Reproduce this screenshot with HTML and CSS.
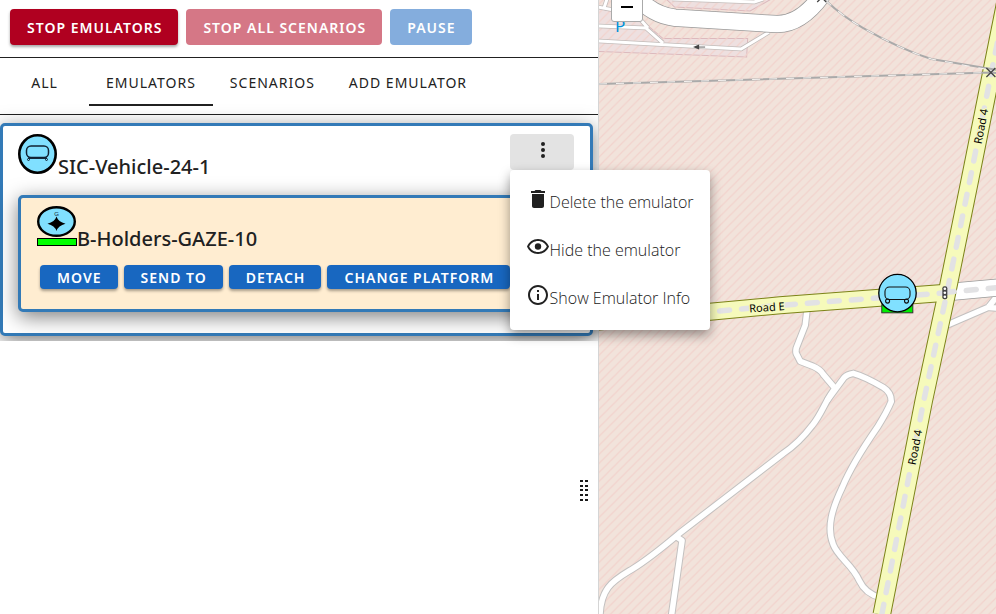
FILE: index.html
```html
<!DOCTYPE html>
<html lang="en">
<head>
<meta charset="utf-8">
<title>Emulators</title>
<link rel="stylesheet" href="styles.css">
</head>
<body>
<main class="app">
  <section class="panel">
    <header class="actions">
      <button class="btn btn-danger" type="button">STOP EMULATORS</button>
      <button class="btn btn-danger" type="button" disabled>STOP ALL SCENARIOS</button>
      <button class="btn btn-primary" type="button" disabled>PAUSE</button>
    </header>
    <nav class="tabs">
      <button class="tab" type="button">ALL</button>
      <button class="tab tab-active" type="button">EMULATORS</button>
      <button class="tab" type="button">SCENARIOS</button>
      <button class="tab" type="button">ADD EMULATOR</button>
    </nav>
    <div class="list">
      <article class="card">
        <div class="card-head">
          <div class="name">
            <svg class="symbol" width="40" height="40" viewBox="0 0 40 40" aria-hidden="true">
              <ellipse cx="19.5" cy="20" rx="18.2" ry="18.7" fill="#80e0ff" stroke="#000" stroke-width="2.6"/>
              <g fill="none" stroke="#123" stroke-width="1.5">
                <rect x="8.5" y="12" width="22" height="11.5" rx="4.5"/>
                <path d="M10 24.2h19"/>
                <circle cx="10.5" cy="25.5" r="1" stroke-width="1"/>
                <circle cx="28.5" cy="25.5" r="1" stroke-width="1"/>
              </g>
            </svg>
            <h2 class="title">SIC-Vehicle-24-1</h2>
          </div>
          <div class="menu-anchor">
            <button class="more" type="button" aria-label="More actions">
              <svg width="24" height="24" viewBox="0 0 24 24" fill="#212121" aria-hidden="true"><circle cx="12" cy="6" r="2"/><circle cx="12" cy="12" r="2"/><circle cx="12" cy="18" r="2"/></svg>
            </button>
            <div class="menu">
              <button class="menu-item" type="button">
                <svg width="24" height="24" viewBox="0 0 24 24" fill="#212121" aria-hidden="true"><path d="M6 19c0 1.1.9 2 2 2h8c1.100 0 2-.9 2-2V7H6v12zM19 4h-3.500l-1-1h-5l-1 1H5v2h14V4z"/></svg>
                <span class="menu-text">Delete the emulator</span>
              </button>
              <button class="menu-item" type="button">
                <svg width="24" height="24" viewBox="0 0 24 24" fill="#212121" aria-hidden="true"><path d="M12 6c3.790 0 7.170 2.130 8.820 5.500C19.170 14.870 15.790 17 12 17s-7.170-2.130-8.820-5.500C4.830 8.130 8.210 6 12 6m0-2C7 4 2.730 7.110 1 11.500 2.730 15.890 7 19 12 19s9.270-3.110 11-7.500C21.270 7.110 17 4 12 4z"/><circle cx="12" cy="11.500" r="3.200"/></svg>
                <span class="menu-text">Hide the emulator</span>
              </button>
              <button class="menu-item" type="button">
                <svg width="24" height="24" viewBox="0 0 24 24" fill="#212121" aria-hidden="true"><path d="M11 7h2v2h-2zm0 4h2v6h-2zm1-9C6.480 2 2 6.480 2 12s4.480 10 10 10 10-4.480 10-10S17.520 2 12 2zm0 18c-4.410 0-8-3.590-8-8s3.590-8 8-8 8 3.590 8 8-3.590 8-8 8z"/></svg>
                <span class="menu-text">Show Emulator Info</span>
              </button>
            </div>
          </div>
        </div>
        <article class="card card-nested">
          <div class="name">
            <svg class="symbol" width="40" height="40" viewBox="0 0 40 40" aria-hidden="true">
              <ellipse cx="19.5" cy="15.500" rx="18.300" ry="14.300" fill="#80e0ff" stroke="#000" stroke-width="2.400"/>
              <text x="19.500" y="10" text-anchor="middle" font-family="Liberation Sans" font-size="6" fill="#123">G</text>
              <path d="M19.500 10.500Q21.200 16 28.500 17.700Q21.200 19.500 19.500 25Q17.800 19.500 10.500 17.700Q17.800 16 19.500 10.500Z"/>
              <rect x=".5" y="32.500" width="39" height="7" fill="#0f0" stroke="#000"/>
            </svg>
            <h2 class="title">B-Holders-GAZE-10</h2>
          </div>
          <div class="card-actions">
            <button class="btn btn-primary btn-dense" type="button">MOVE</button>
            <button class="btn btn-primary btn-dense" type="button">SEND TO</button>
            <button class="btn btn-primary btn-dense" type="button">DETACH</button>
            <button class="btn btn-primary btn-dense" type="button">CHANGE PLATFORM</button>
          </div>
        </article>
      </article>
    </div>
    <div class="rest"></div>
    <div class="grip" role="separator" aria-orientation="vertical">
      <svg class="grip-dots" width="8" height="22" viewBox="0 0 8 22" fill="#1a1a1a" aria-hidden="true">
        <path d="M0 0h3v2H0zM5 0h3v2H5zM0 5h3v2H0zM5 5h3v2H5zM0 9h3v2H0zM5 9h3v2H5zM0 14h3v2H0zM5 14h3v2H5zM0 19h3v2H0zM5 19h3v2H5z"/>
      </svg>
    </div>
  </section>
  <section class="map">
    <svg class="map-canvas" viewBox="599 0 397 614" preserveAspectRatio="xMinYMin slice" role="img" aria-label="Map">
      <defs>
        <pattern id="hatch" width="9" height="9" patternUnits="userSpaceOnUse">
          <path d="M-2 2L2 -2M-2 11L11 -2M7 11L11 7" stroke="#f2d2cc" stroke-width="1.200" fill="none"/>
        </pattern>
        <path id="r4" d="M1005.500 0L969.500 180L946.500 293L923.500 400L881.500 614"/>
        <path id="re" d="M590 322L710 311.500L780 305L946 292.500"/>
        <g id="tracks">
          <path d="M807 308L805 325L796 348Q795 352 797 355L800 361L813 366Q820 369 823 374L834 387"/>
          <path d="M827 400L844 377Q847 374 853 373Q864 376 883 387Q891 392 891 401Q887 411 877 427Q852 463 842 487C832 508 826 527 833 544C838 557 852 564 859 580Q865 593 880 597"/>
          <path d="M835 388C826 398 822 413 812 425C803 437 795 445 783 453L679 533C660 549 649 558 633 568C615 579 599 586 600 620"/>
          <path d="M676 536L682 540L671 618"/>
          <path d="M944 326L988 307L998 294M986 307L998 308"/>
        </g>
        <g id="lanes">
          <path d="M599 26L646 28L663 43M639 18L648 28M599 41L741 49L769 32M672 -1L754 2L763 -1M598 7L614 10M604 8L607 -1"/>
        </g>
      </defs>
      <rect x="590" width="1400" height="1400" fill="#f2e3db"/>
      <path d="M590 6L640 19L663 38.500H747.500L746.500 57L590 51ZM665 -2L674.500 7L750 11L773 -2Z" fill="#eee0e0" stroke="#dcb9bd"/>
      <rect x="590" width="1400" height="1400" fill="url(#hatch)"/>
      <g fill="none" stroke-linejoin="round">
        <use href="#lanes" stroke="#c2bcba" stroke-width="4.500"/>
        <use href="#lanes" stroke="#fff" stroke-width="3"/>
        <path d="M636 -4Q652 15 675 17.800L776 24Q800 25 822 -5" stroke="#999" stroke-width="18"/>
        <path d="M636 -4Q652 15 675 17.800L776 24Q800 25 822 -5" stroke="#fff" stroke-width="16.500"/>
        <use href="#tracks" stroke="#c3c1c0" stroke-width="7.500"/>
        <use href="#tracks" stroke="#fff" stroke-width="5.500"/>
        <path d="M946 292L1000 287" stroke="#999" stroke-width="18"/>
        <path d="M946 292L1000 287" stroke="#fff" stroke-width="16.500"/>
        <use href="#re" stroke="#7c8318" stroke-width="18"/>
        <use href="#r4" stroke="#7c8318" stroke-width="18.500"/>
        <use href="#re" stroke="#f6fabb" stroke-width="16"/>
        <use href="#r4" stroke="#f6fabb" stroke-width="16.500"/>
        <path d="M946 292L1000 287" stroke="#e2e2e4" stroke-width="5.500" stroke-linecap="round" stroke-dasharray="10 12" stroke-dashoffset="-20"/>
        <use href="#re" stroke="#e2e2e4" stroke-width="5.500" stroke-linecap="round" stroke-dasharray="10 12" stroke-dashoffset="2"/>
        <use href="#r4" stroke="#e2e2e4" stroke-width="5.500" stroke-linecap="round" stroke-dasharray="10 12" stroke-dashoffset="0"/>
        <path d="M599 84L990 72.500L998 73M825 0Q843 17 863 28Q900 49 931 59L998 70" stroke="#aaa" stroke-width="2"/>
        <path d="M599 84L990 72.500M825 0Q843 17 863 28Q900 49 931 59L990 70" stroke="#f5f2f0" stroke-width="1" stroke-dasharray="8 9"/>
        <path d="M986 68l9 9m0-9l-9 9M817 -7l9 9m0-9l-9 9" stroke="#444" stroke-width="1.300"/>
        <path d="M697 47h8" stroke="#666" stroke-width="1"/>
      </g>
      <path d="M693 47l6-2.500v5z" fill="#444"/>
      <g class="road-label">
        <text transform="translate(767 311) rotate(-4)">Road E</text>
        <text transform="translate(984.500 127) rotate(-79)">Road 4</text>
        <text transform="translate(918.500 447.500) rotate(-79)">Road 4</text>
      </g>
      <text class="parking" x="615" y="32">P</text>
      <rect x="942" y="286" width="5" height="13" rx="2" fill="#444"/>
      <g fill="#fff"><circle cx="944.500" cy="288.500" r="1.300"/><circle cx="944.500" cy="292.500" r="1.300"/><circle cx="944.500" cy="296.500" r="1.300"/></g>
      <rect x="881.500" y="304.500" width="31" height="8" fill="#0e0" stroke="#333"/>
      <circle cx="897.200" cy="292.800" r="18.700" fill="#80e0ff" stroke="#000" stroke-width="1.300"/>
      <g fill="none" stroke="#111" stroke-width="1.100">
        <rect x="884.700" y="286.700" width="25" height="12.500" rx="4.500"/>
        <circle cx="887.300" cy="300.800" r="2"/><circle cx="906.200" cy="300.800" r="2"/>
      </g>
    </svg>
    <button class="zoom-out" type="button" aria-label="Zoom out"><span class="minus"></span></button>
  </section>
</main>
</body>
</html>
```
FILE: styles.css
```css
* {
  box-sizing: border-box;
}

body {
  margin: 0;
  background: #fff;
  color: #212121;
  font-family: "Noto Sans", "Open Sans", sans-serif;
}

button {
  border: 0;
  font: inherit;
  color: inherit;
  cursor: pointer;
}

.app {
  display: grid;
  grid-template-columns: 3fr 2fr;
  height: 100vh;
}

.panel {
  position: relative;
  display: flex;
  flex-direction: column;
  min-width: 0;
}

.actions {
  display: flex;
  gap: 8px;
  padding: 9px 10px 12px;
  border-bottom: 1px solid #212121;
}

.btn {
  height: 36px;
  padding: 2px 16px 0 17px;
  border-radius: 4px;
  color: #fff;
  font-size: 14px;
  font-weight: 600;
  line-height: 20px;
  letter-spacing: 1px;
  white-space: nowrap;
  box-shadow: 0 2px 3px rgba(0, 0, 0, 0.35);
}

.btn-danger {
  background: #b00020;
}

.btn-primary {
  background: #1867c0;
}

.btn:disabled {
  box-shadow: none;
}

.btn-danger:disabled {
  background: #d57786;
}

.btn-primary:disabled {
  background: #84addd;
}

.btn-dense {
  height: 24px;
}

.tabs {
  display: flex;
  padding-bottom: 8px;
  border-bottom: 1px solid #212121;
}

.tab {
  min-width: 89px;
  height: 48px;
  padding: 2px 17px 0;
  border-bottom: 2px solid transparent;
  background: none;
  font-size: 14px;
  letter-spacing: 1px;
  white-space: nowrap;
}

.tab-active {
  border-bottom-color: #212121;
}

.list {
  padding: 8px 5px 5px 0;
}

.card {
  padding: 8px 16px 21px 15px;
  border: 3px solid #337ab7;
  border-radius: 5px;
  background: #fff;
  box-shadow: 0 5px 20px rgba(0, 0, 0, 0.5);
}

.card-nested {
  margin-top: 16px;
  padding: 8px 16px 20px;
  background: #ffedd1;
}

.card-head {
  display: flex;
  justify-content: space-between;
}

.name {
  display: flex;
  align-items: baseline;
}

.symbol {
  flex: none;
}

.title {
  margin: 0;
  font-size: 20px;
  font-weight: 500;
  line-height: 24px;
}

.card-actions {
  display: flex;
  gap: 6px;
  padding: 14px 3px 0;
}

.menu-anchor {
  position: relative;
  height: 36px;
}

.more {
  display: flex;
  justify-content: center;
  width: 64px;
  height: 36px;
  padding: 4px 0 0 2px;
  border-radius: 4px;
  background: #e3e3e3;
}

.menu {
  position: absolute;
  top: 100%;
  left: 0;
  z-index: 5;
  width: 200px;
  padding: 8px 0;
  border-radius: 4px;
  background: #fff;
  box-shadow: 0 5px 12px rgba(0, 0, 0, 0.4);
}

.menu-item {
  display: flex;
  align-items: flex-start;
  width: 100%;
  height: 48px;
  padding: 9px 0 0 16px;
  background: none;
  font-family: "Open Sans", "Noto Sans", sans-serif;
  font-size: 16px;
  font-weight: 300;
  line-height: 24px;
  white-space: nowrap;
}

.menu-text {
  padding-top: 3px;
}

.rest {
  position: relative;
  flex: 1;
  background: #fff;
}

.grip {
  position: absolute;
  top: 80%;
  right: 10px;
  transform: translateY(-50%);
  cursor: col-resize;
}

.grip-dots {
  display: block;
}

.map {
  position: relative;
  z-index: 1;
  overflow: hidden;
  border-left: 1px solid #d5d5d5;
  background: #f2e3db;
}

.map-canvas {
  display: block;
  width: 100%;
  height: 100%;
}

.road-label {
  font-family: "Noto Sans", sans-serif;
  font-size: 11px;
  text-anchor: middle;
  fill: #000;
  stroke: #f6fabb;
  stroke-width: 2px;
  paint-order: stroke;
}

.parking {
  font-family: "Noto Sans", sans-serif;
  font-size: 17px;
  fill: #0092da;
}

.zoom-out {
  position: absolute;
  top: -9px;
  left: 12px;
  display: flex;
  align-items: center;
  justify-content: center;
  width: 32px;
  height: 31px;
  border: 1px solid #aaa;
  border-radius: 3px;
  background: #fff;
}

.minus {
  width: 12px;
  height: 2px;
  background: #000;
}
```
